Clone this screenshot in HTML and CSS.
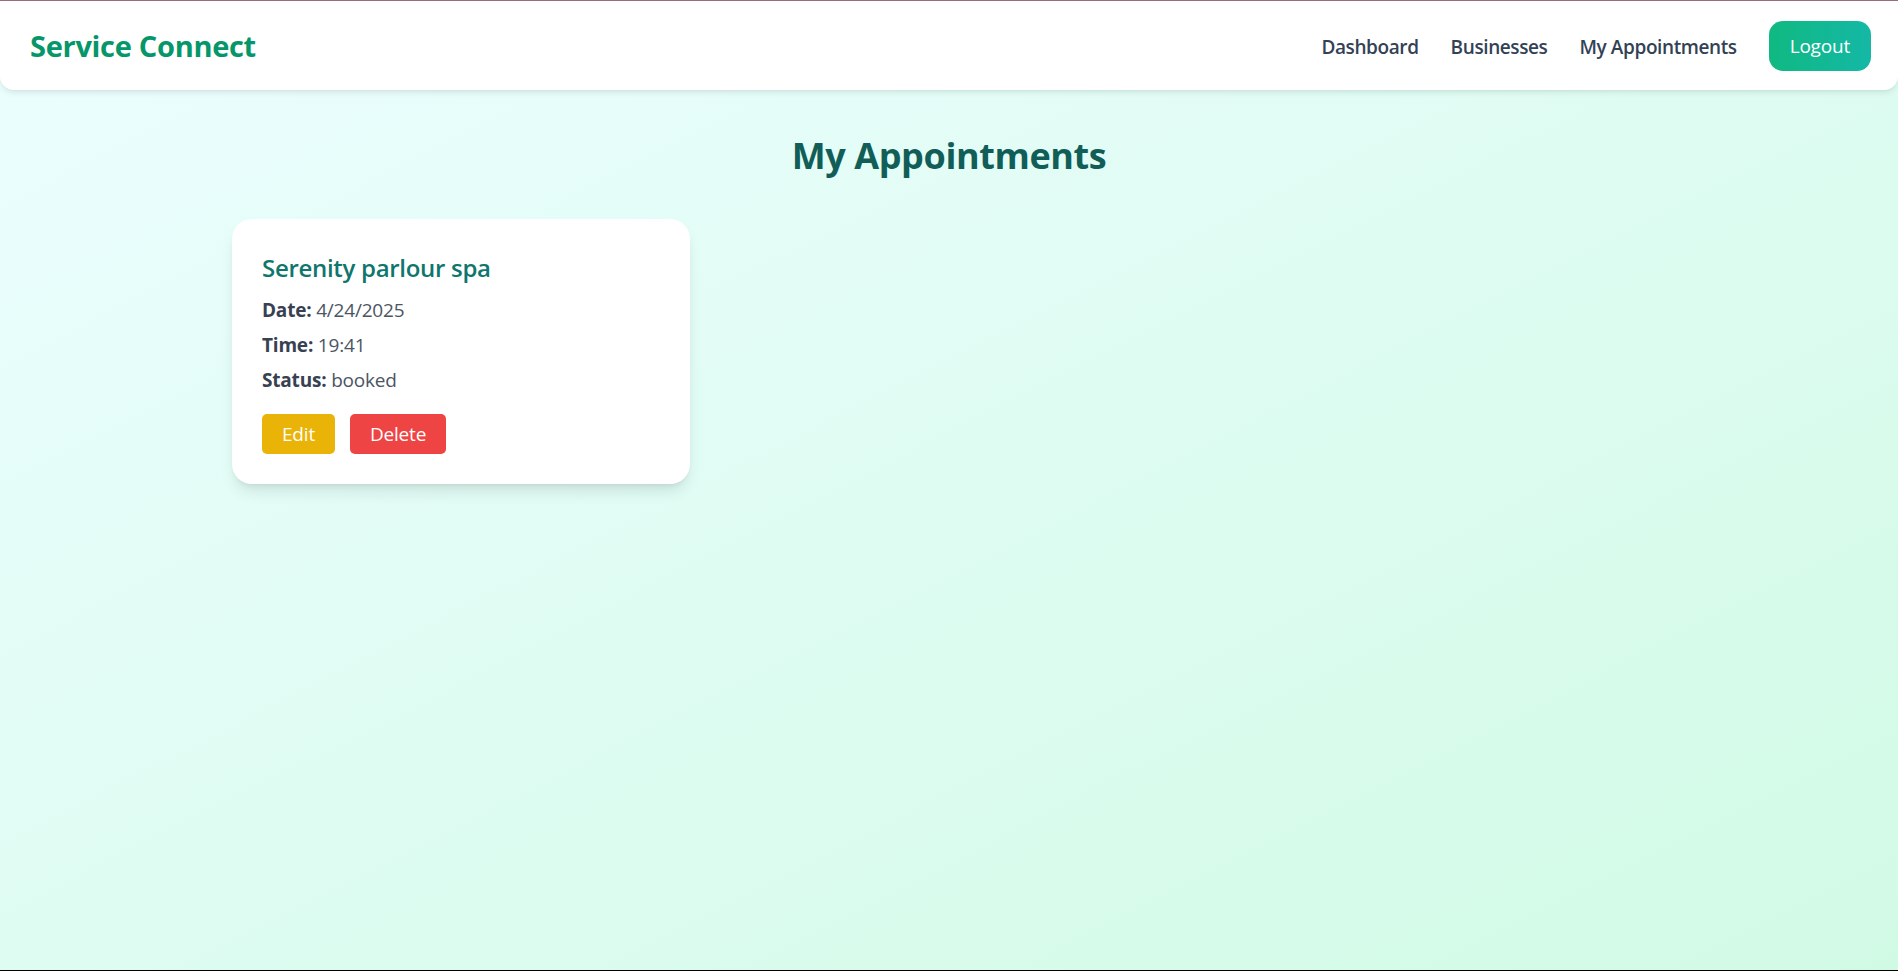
FILE: index.html
```html
<!DOCTYPE html>
<html lang="en">
<head>
<meta charset="utf-8">
<title>Service Connect</title>
<link rel="stylesheet" href="styles.css">
</head>
<body>
<div class="page">
  <header class="topbar">
    <div class="brand">Service Connect</div>
    <nav class="nav">
      <a class="nav-link" href="#">Dashboard</a>
      <a class="nav-link" href="#">Businesses</a>
      <a class="nav-link" href="#">My Appointments</a>
      <button class="logout">Logout</button>
    </nav>
  </header>
  <main class="content">
    <h1 class="page-title">My Appointments</h1>
    <div class="grid">
      <div class="card">
        <h2 class="card-title">Serenity parlour spa</h2>
        <p class="row"><strong>Date:</strong> 4/24/2025</p>
        <p class="row"><strong>Time:</strong> 19:41</p>
        <p class="row"><strong>Status:</strong> booked</p>
        <div class="actions">
          <button class="btn btn-edit">Edit</button>
          <button class="btn btn-delete">Delete</button>
        </div>
      </div>
    </div>
  </main>
</div>
</body>
</html>
```

FILE: styles.css
```css
* { box-sizing: border-box; }
html, body { margin: 0; padding: 0; }
body {
  font-family: "Open Sans", "Noto Sans", "Liberation Sans", sans-serif;
  color: #334155;
}
.page {
  min-height: 100vh;
  border-top: 1px solid #9b6b7b;
  border-bottom: 1px solid #000;
  background: linear-gradient(to bottom right, #ecfeff, #d1fae5);
}
.topbar {
  height: 89px;
  background: #fff;
  border-radius: 0 0 14px 14px;
  box-shadow: 0 4px 6px -1px rgba(0,0,0,0.08), 0 2px 4px -2px rgba(0,0,0,0.06);
  display: flex;
  align-items: center;
  justify-content: space-between;
  padding: 0 27px 0 30px;
}
.brand {
  font-size: 29px;
  font-weight: 700;
  color: #059669;
  letter-spacing: -0.3px;
}
.nav {
  display: flex;
  align-items: center;
  gap: 32px;
}
.nav-link {
  font-size: 19px;
  font-weight: 600;
  color: #334155;
  text-decoration: none;
  letter-spacing: -0.4px;
  padding-top: 2px;
}
.logout {
  font-family: inherit;
  font-size: 19px;
  color: #fff;
  border: 0;
  height: 50px;
  padding: 0 21px;
  border-radius: 14px;
  background: linear-gradient(to right, #10b981, #14b8a6);
  letter-spacing: -0.2px;
}
.content {
  padding-top: 41px;
}
.page-title {
  margin: 0 0 39px;
  text-align: center;
  font-size: 36px;
  font-weight: 700;
  color: #115e59;
  letter-spacing: -0.4px;
}
.grid {
  max-width: 1434px;
  margin: 0 auto;
  display: grid;
  grid-template-columns: repeat(3, 1fr);
  gap: 30px;
}
.card {
  background: #fff;
  border-radius: 20px;
  padding: 32px 30px 30px;
  box-shadow: 0 10px 15px -3px rgba(0,0,0,0.1), 0 4px 6px -4px rgba(0,0,0,0.1);
}
.card-title {
  margin: 0 0 12px;
  font-size: 24px;
  font-weight: 600;
  color: #0f766e;
  letter-spacing: -0.3px;
}
.row {
  margin: 0 0 7px;
  font-size: 19px;
  line-height: 28px;
  color: #4b5563;
  letter-spacing: -0.2px;
}
.row strong { color: #374151; font-weight: 700; }
.actions {
  display: flex;
  gap: 15px;
  margin-top: 20px;
}
.btn {
  font-family: inherit;
  font-size: 19px;
  color: #fff;
  border: 0;
  height: 40px;
  padding: 0 20px;
  border-radius: 5px;
  letter-spacing: -0.2px;
}
.btn-edit { background: #eab308; }
.btn-delete { background: #ef4444; }
```
